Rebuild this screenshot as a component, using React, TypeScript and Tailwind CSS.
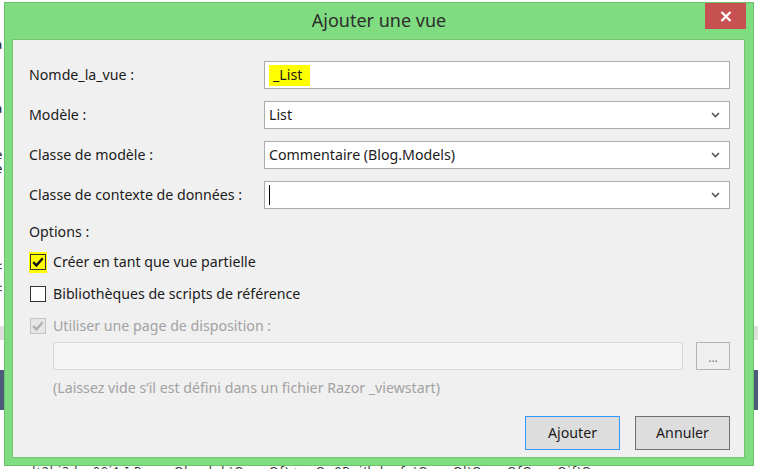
const labelText = 'text-[14.2px] leading-[20px] text-[#1b1b1b]'

const Chevron = () => (
  <svg width="9" height="6" viewBox="0 0 9 6" className="shrink-0">
    <path d="M1 1 L4.5 4.5 L8 1" fill="none" stroke="#555" strokeWidth="1.6" />
  </svg>
)

const Check = ({ color }: { color: string }) => (
  <svg width="14" height="14" viewBox="0 0 14 14">
    <path d="M2.2 7.2 L5.4 10.4 L11.8 3.2" fill="none" stroke={ color } strokeWidth="2.4" />
  </svg>
)

const Field = ({ children, select }: { children?: React.ReactNode, select?: boolean }) => (
  <div className="flex h-[28px] items-center border border-[#ababab] bg-white pl-[4px] pr-[9px]">
    <div className="flex flex-1 items-center">{ children }</div>
    { select && <Chevron /> }
  </div>
)

const Backdrop = () => (
  <div className="flex flex-col text-[13px] leading-[14px] text-[#222]">
    <div className="h-[37px]" />
    <div className="h-[16px] -ml-[5px]">a</div>
    <div className="h-[48px]" />
    <div className="h-[16px] -ml-[5px]">a</div>
    <div className="h-[30px]" />
    <div className="h-[14px] -ml-[5px]">e</div>
    <div className="h-[14px] -ml-[5px]">e</div>
    <div className="h-[84px]" />
    <div className="h-[22px] -ml-[5px]">&lt;</div>
    <div className="h-[22px] -ml-[5px]">&lt;</div>
    <div className="h-[23px]" />
    <div className="h-[14px] bg-[#dedede]" />
    <div className="h-[30px]" />
    <div className="h-[40px] bg-[#4b5b78]" />
    <div className="h-[55px]" />
    <div className="whitespace-nowrap pl-[12px] text-[12px] leading-[14px] tracking-[1px] text-[#333]">
      gadt2bi3d.w00i1 I PonosObaqlob)OeouOf)&lt;rmOg9Pnj(lolpafo)OeouOl)OeouOfOeouOjf)Oeou
    </div>
  </div>
)

export default function App() {
  return (
    <div className="relative h-[469px] w-[758px] overflow-hidden bg-white font-['Noto_Sans',sans-serif]">
      <Backdrop />

      <div className="absolute left-[4px] top-[2px] flex h-[464px] w-[750px] flex-col border border-[#6dc16d] bg-[#80dc80]">
        <div className="relative flex h-[36px] shrink-0 items-center justify-center">
          <span className="-mt-[1px] text-[18px] text-[#2d2d2d]">Ajouter une vue</span>
          <button className="absolute right-[7px] top-0 flex h-[26px] w-[41px] items-center justify-center bg-[#c75050]">
            <svg width="12" height="11" viewBox="0 0 12 11">
              <path d="M1.5 1 L10.5 10 M10.5 1 L1.5 10" stroke="white" strokeWidth="2.4" />
            </svg>
          </button>
        </div>

        <div className="ml-[7px] mr-[8px] flex h-[419px] flex-col border border-[#74c474] bg-[#f0f0f0] pl-[16px] pr-[14px] pt-[21px] pb-[7px]">
          <div className="grid grid-cols-[235px_1fr] gap-y-[12px]">
            <div className={ `${ labelText } flex items-center` }>Nomde_la_vue :</div>
            <Field>
              <span className="flex h-[21px] items-center bg-[#ffff00] pl-[4px] pr-[8px] text-[14.2px] text-[#1b1b1b]">_List</span>
            </Field>

            <div className={ `${ labelText } flex items-center` }>Modèle :</div>
            <Field select>
              <span className="text-[14.2px] text-[#1b1b1b]">List</span>
            </Field>

            <div className={ `${ labelText } flex items-center` }>Classe de modèle :</div>
            <Field select>
              <span className="text-[14.2px] text-[#1b1b1b]">Commentaire (Blog.Models)</span>
            </Field>

            <div className={ `${ labelText } flex items-center` }>Classe de contexte de données :</div>
            <Field select>
              <span className="h-[20px] w-[1px] bg-black" />
            </Field>
          </div>

          <div className={ `${ labelText } mt-[13px]` }>Options :</div>

          <div className="mt-[4px] flex h-[32px] items-center gap-[6px]">
            <div className="flex h-[21px] w-[18px] items-center justify-center bg-[#ffff00]">
              <div className="flex h-[16px] w-[16px] items-center justify-center border border-[#333]">
                <Check color="#111" />
              </div>
            </div>
            <span className={ labelText }>Créer en tant que vue partielle</span>
          </div>

          <div className="flex h-[32px] items-center gap-[6px]">
            <div className="flex w-[18px] items-center justify-center">
              <div className="h-[16px] w-[16px] border border-[#333] bg-white" />
            </div>
            <span className={ labelText }>Bibliothèques de scripts de référence</span>
          </div>

          <div className="flex h-[32px] items-center gap-[6px]">
            <div className="flex w-[18px] items-center justify-center">
              <div className="flex h-[16px] w-[16px] items-center justify-center border border-[#c4c4c4] bg-[#e6e6e6]">
                <Check color="#b0b0b0" />
              </div>
            </div>
            <span className="text-[14.2px] leading-[20px] text-[#a2a2a2]">Utiliser une page de disposition :</span>
          </div>

          <div className="ml-[24px] flex gap-[13px]">
            <div className="h-[28px] flex-1 border border-[#d9d9d9] bg-[#f5f5f5]" />
            <button className="flex h-[28px] w-[34px] items-end justify-center border border-[#b4b4b4] bg-[#efefef] pb-[5px] text-[12px] leading-[12px] text-[#777]">
              ...
            </button>
          </div>

          <div className="ml-[24px] mt-[8px] text-[14.2px] leading-[20px] text-[#a2a2a2]">
            (Laissez vide s’il est défini dans un fichier Razor _viewstart)
          </div>

          <div className="mt-auto flex justify-end gap-[15px]">
            <button className="h-[34px] w-[95px] border border-[#3399ff] bg-[#dddddd] text-[14.2px] text-[#1b1b1b]">Ajouter</button>
            <button className="h-[34px] w-[95px] border border-[#707070] bg-[#dddddd] text-[14.2px] text-[#1b1b1b]">Annuler</button>
          </div>
        </div>
      </div>
    </div>
  )
}
